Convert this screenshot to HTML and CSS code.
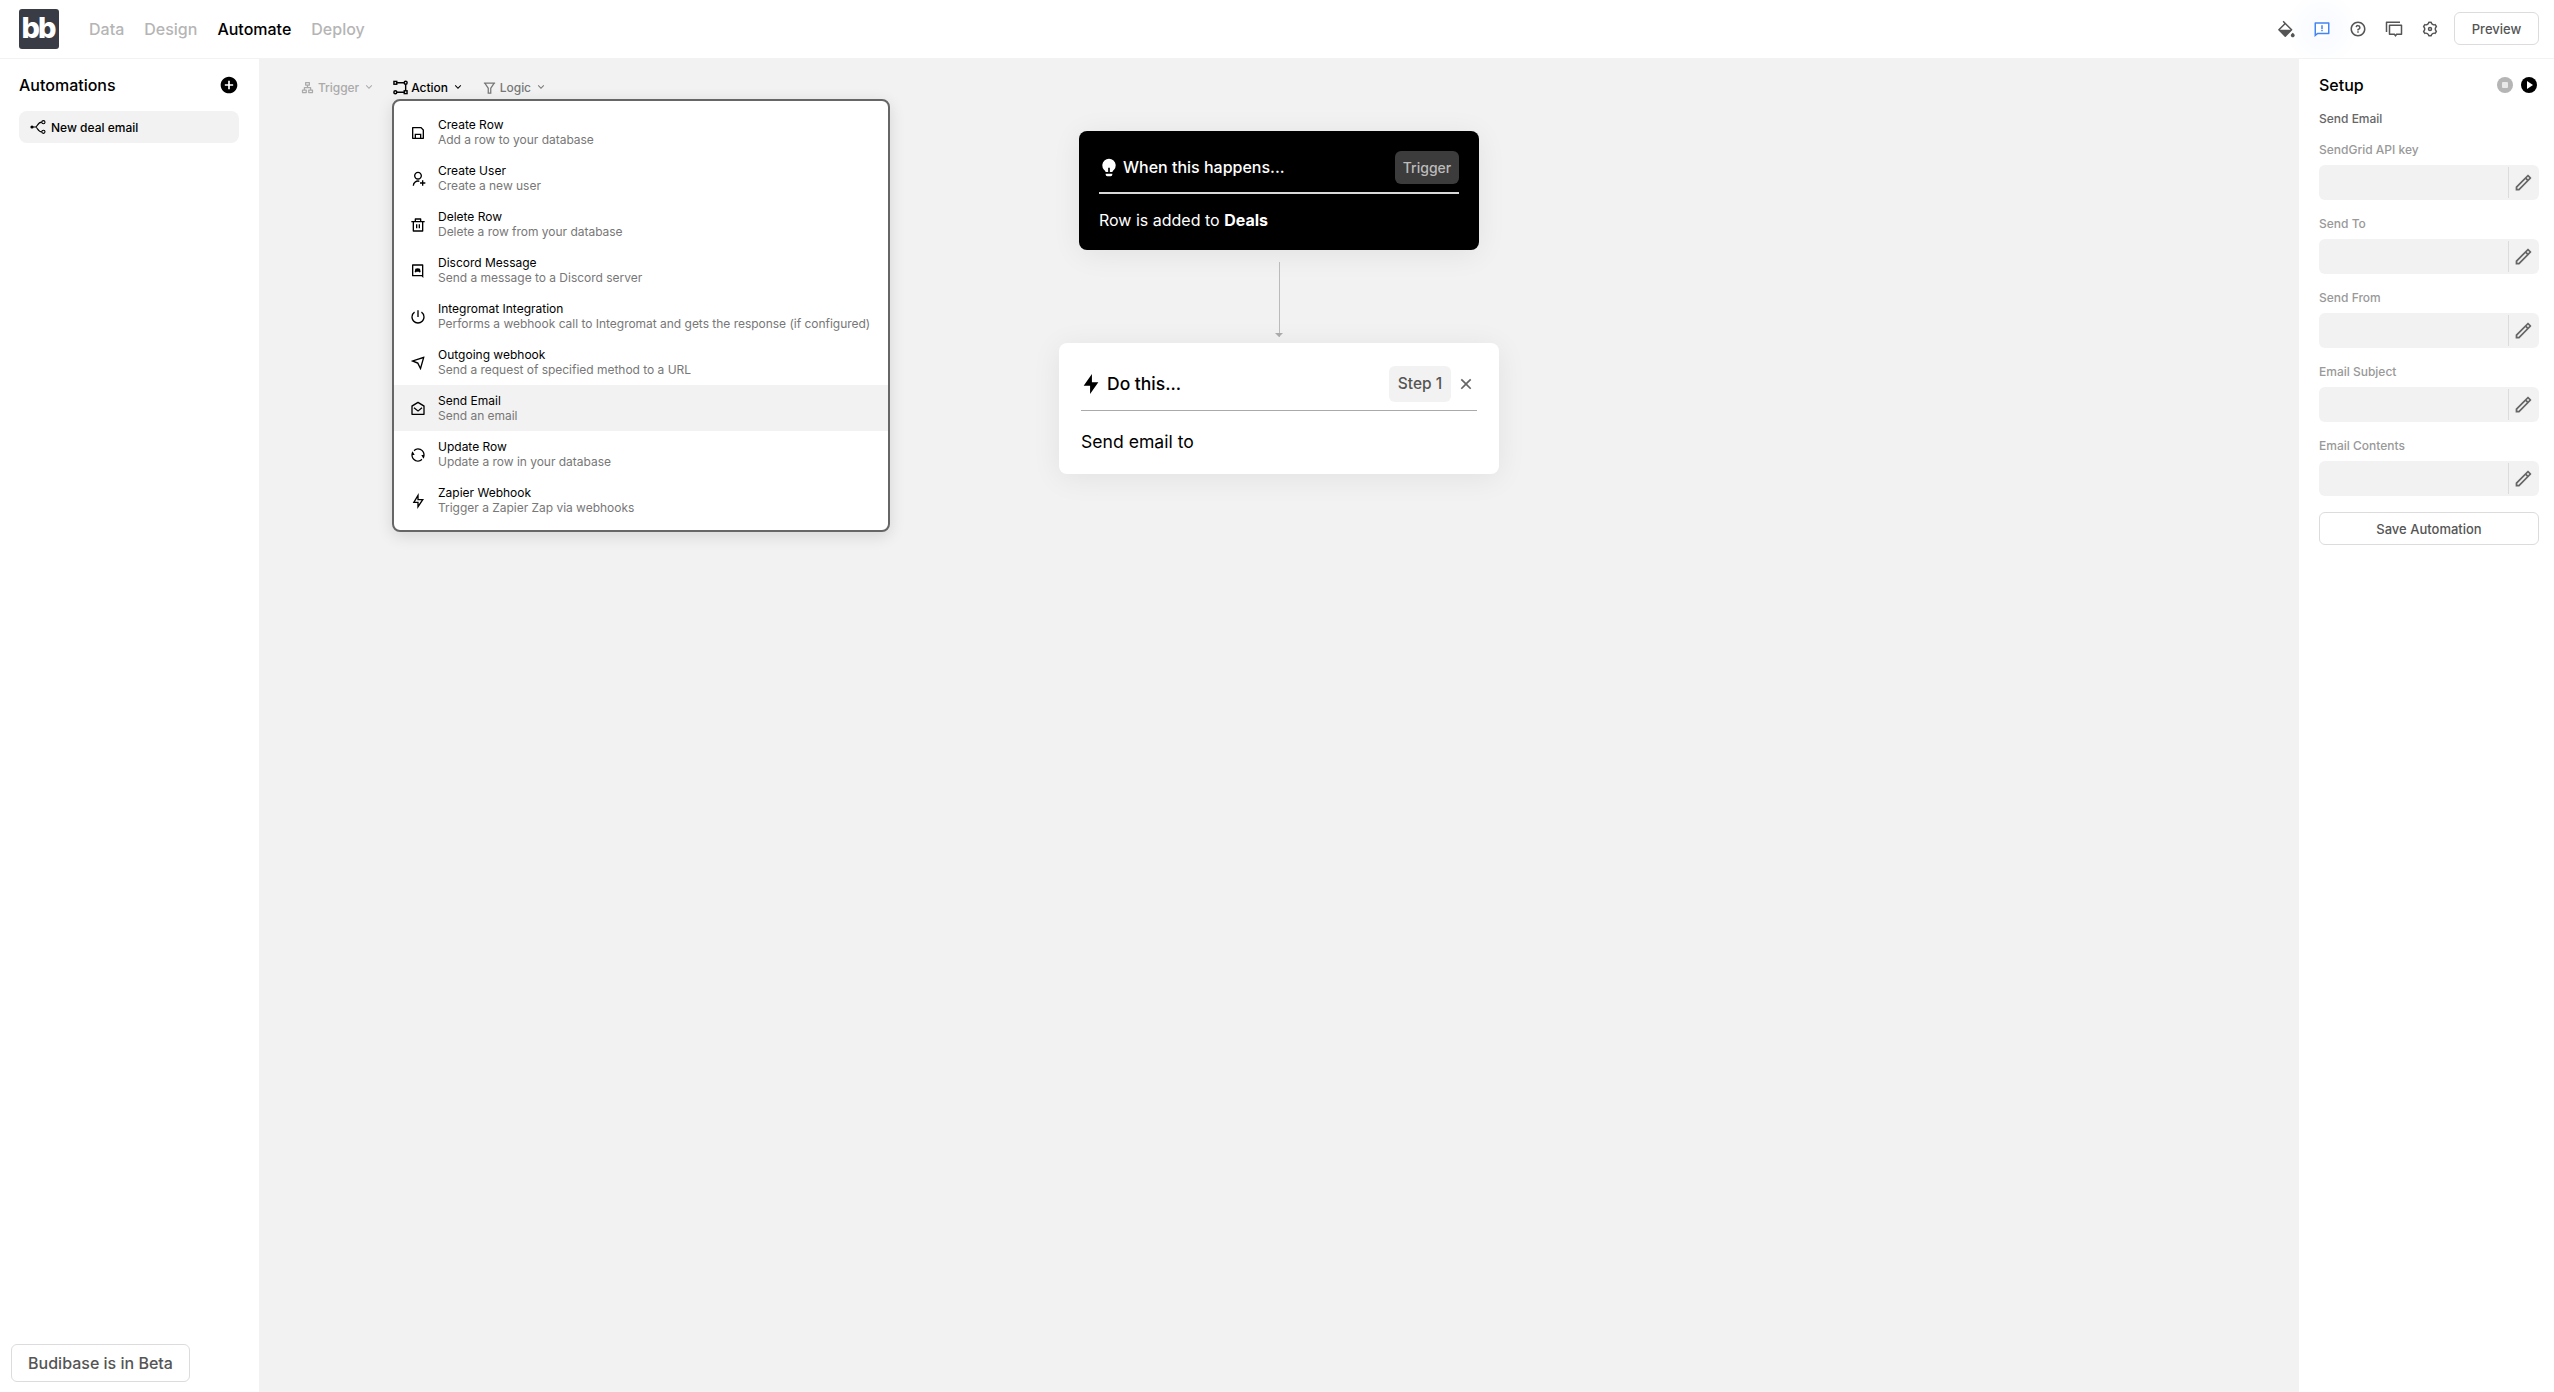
FILE: index.html
```html
<!DOCTYPE html>
<html>
<head>
    <meta charset="utf-8">
    <title>Budibase - Automate</title>
    <link rel="stylesheet" href="styles.css">
</head>
<body>
<div class="app">
    <header class="topbar">
        <div class="logo"><span>bb</span></div>
        <nav class="tabs">
            <a class="tab">Data</a>
            <a class="tab">Design</a>
            <a class="tab active">Automate</a>
            <a class="tab">Deploy</a>
        </nav>
        <div class="toolbar-right">
            <svg class="top-icon" viewBox="0 0 24 24"><path d="M19.228 18.732l1.768-1.768 1.767 1.768a2.5 2.5 0 1 1-3.535 0zM8.878 1.08l11.314 11.313a1 1 0 0 1 0 1.415l-8.485 8.485a1 1 0 0 1-1.414 0l-8.485-8.485a1 1 0 0 1 0-1.415l7.778-7.778-2.122-2.121L8.88 1.08zM11 6.03L3.929 13.1H18.07L11 6.03z"/></svg>
            <span class="glow"><svg class="top-icon blue" viewBox="0 0 24 24"><path d="M6.455 19L2 22.5V4a1 1 0 0 1 1-1h18a1 1 0 0 1 1 1v14a1 1 0 0 1-1 1H6.455zm-.692-2H20V5H4v13.385L5.763 17zM11 13h2v2h-2v-2zm0-6h2v5h-2V7z"/></svg></span>
            <svg class="top-icon" viewBox="0 0 24 24"><path d="M12 22C6.477 22 2 17.523 2 12S6.477 2 12 2s10 4.477 10 10-4.477 10-10 10zm0-2a8 8 0 1 0 0-16 8 8 0 0 0 0 16zm-1-5h2v2h-2v-2zm2-1.645V14h-2v-1.5a1 1 0 0 1 1-1 1.5 1.5 0 1 0-1.471-1.794l-1.962-.393A3.501 3.501 0 1 1 13 13.355z"/></svg>
            <svg class="top-icon chat" viewBox="0 0 24 24"><path d="M2 2h18v2H3v12H1V3a1 1 0 0 1 1-1zM6 6h16a1 1 0 0 1 1 1v12a1 1 0 0 1-1 1h-6l-2 2.5L12 20H6a1 1 0 0 1-1-1V7a1 1 0 0 1 1-1zm1 2v10h6l1 1.3 1-1.3h6V8H7z"/></svg>
            <svg class="top-icon" viewBox="0 0 24 24"><path d="M3.34 17a10.018 10.018 0 0 1-.978-2.326 3 3 0 0 0 .002-5.347A9.99 9.99 0 0 1 4.865 4.99a3 3 0 0 0 4.631-2.674 9.99 9.99 0 0 1 5.007.002 3 3 0 0 0 4.632 2.672c.579.59 1.093 1.261 1.525 2.01.433.749.757 1.53.978 2.326a3 3 0 0 0-.002 5.347 9.99 9.99 0 0 1-2.501 4.337 3 3 0 0 0-4.631 2.674 9.99 9.99 0 0 1-5.007-.002 3 3 0 0 0-4.632-2.672A10.018 10.018 0 0 1 3.34 17zm5.66.196a4.993 4.993 0 0 1 2.25 2.77c.499.047 1 .048 1.499.001A4.993 4.993 0 0 1 15 17.197a4.993 4.993 0 0 1 3.525-.565c.29-.408.54-.843.748-1.298A4.993 4.993 0 0 1 18 12c0-1.26.47-2.437 1.273-3.334a8.126 8.126 0 0 0-.75-1.298A4.993 4.993 0 0 1 15 6.804a4.993 4.993 0 0 1-2.25-2.77c-.499-.047-1-.048-1.499-.001A4.993 4.993 0 0 1 9 6.803a4.993 4.993 0 0 1-3.525.565 7.99 7.99 0 0 0-.748 1.298A4.993 4.993 0 0 1 6 12c0 1.26-.47 2.437-1.273 3.334a8.126 8.126 0 0 0 .75 1.298A4.993 4.993 0 0 1 9 17.196zM12 15a3 3 0 1 1 0-6 3 3 0 0 1 0 6zm0-2a1 1 0 1 0 0-2 1 1 0 0 0 0 2z"/></svg>
            <button class="outline-btn preview">Preview</button>
        </div>
    </header>

    <div class="main">
        <aside class="sidebar">
            <div class="panel-head">
                <h2>Automations</h2>
                <svg class="add-icon" viewBox="0 0 24 24"><path d="M12 22C6.477 22 2 17.523 2 12S6.477 2 12 2s10 4.477 10 10-4.477 10-10 10zm-1-11H7v2h4v4h2v-4h4v-2h-4V7h-2v4z"/></svg>
            </div>
            <div class="auto-row">
                <svg class="row-icon" viewBox="0 0 16 16"><circle cx="2" cy="8" r="1.6"/><circle cx="13.4" cy="3.2" r="1.6" fill="none" stroke="#000" stroke-width="1.1"/><circle cx="13.4" cy="12.8" r="1.6" fill="none" stroke="#000" stroke-width="1.1"/><path d="M3 8h2.5c2 0 2-4.8 6.3-4.8M5.5 8c2 0 2 4.8 6.3 4.8" fill="none" stroke="#000" stroke-width="1.2"/></svg>
                <span>New deal email</span>
            </div>
            <button class="outline-btn beta">Budibase is in Beta</button>
        </aside>

        <section class="canvas">
            <div class="block-tabs">
                <div class="block-tab muted">
                    <svg viewBox="0 0 24 24"><path d="M15 3a1 1 0 0 1 1 1v4a1 1 0 0 1-1 1h-2v2h4a1 1 0 0 1 1 1v3h2a1 1 0 0 1 1 1v4a1 1 0 0 1-1 1h-6a1 1 0 0 1-1-1v-4a1 1 0 0 1 1-1h2v-2H8v2h2a1 1 0 0 1 1 1v4a1 1 0 0 1-1 1H4a1 1 0 0 1-1-1v-4a1 1 0 0 1 1-1h2v-3a1 1 0 0 1 1-1h4V9H9a1 1 0 0 1-1-1V4a1 1 0 0 1 1-1h6zM9 17H5v2h4v-2zm10 0h-4v2h4v-2zM14 5h-4v2h4V5z"/></svg>
                    <span>Trigger</span>
                    <svg class="chev" viewBox="0 0 24 24"><path d="M12 13.172l4.95-4.95 1.414 1.414L12 16 5.636 9.636 7.05 8.222z"/></svg>
                </div>
                <div class="block-tab selected">
                    <svg viewBox="0 0 16 16"><g fill="none" stroke="#000" stroke-width="1.5"><rect x="1" y="1.5" width="3" height="3"/><circle cx="13.5" cy="3" r="1.6"/><circle cx="2.5" cy="13" r="1.6"/><rect x="12" y="11.5" width="3" height="3"/><path d="M4 3h8M4 13h8M13.5 4.6v6.9"/></g></svg>
                    <span>Action</span>
                    <svg class="chev" viewBox="0 0 24 24"><path d="M12 13.172l4.95-4.95 1.414 1.414L12 16 5.636 9.636 7.05 8.222z"/></svg>
                </div>
                <div class="block-tab logic">
                    <svg viewBox="0 0 24 24"><path d="M21 4v2h-1l-5 7.5V22H9v-8.5L4 6H3V4h18zM6.404 6L11 12.894V20h2v-7.106L17.596 6H6.404z"/></svg>
                    <span>Logic</span>
                    <svg class="chev" viewBox="0 0 24 24"><path d="M12 13.172l4.95-4.95 1.414 1.414L12 16 5.636 9.636 7.05 8.222z"/></svg>
                </div>

                <div class="dropdown">
                    <div class="drop-item">
                        <svg viewBox="0 0 24 24"><path d="M7 19v-6h10v6h2V7.828L16.172 5H5v14h2zM4 3h13l4 4v13a1 1 0 0 1-1 1H4a1 1 0 0 1-1-1V4a1 1 0 0 1 1-1zm5 12v4h6v-4H9z"/></svg>
                        <div><div class="drop-title">Create Row</div><div class="drop-desc">Add a row to your database</div></div>
                    </div>
                    <div class="drop-item">
                        <svg viewBox="0 0 24 24"><path d="M14 14.252v2.09A6 6 0 0 0 6 22l-2-.001a8 8 0 0 1 10-7.748zM12 13c-3.315 0-6-2.685-6-6s2.685-6 6-6 6 2.685 6 6-2.685 6-6 6zm0-2c2.21 0 4-1.79 4-4s-1.79-4-4-4-4 1.79-4 4 1.79 4 4 4zm6 6v-3h2v3h3v2h-3v3h-2v-3h-3v-2h3z"/></svg>
                        <div><div class="drop-title">Create User</div><div class="drop-desc">Create a new user</div></div>
                    </div>
                    <div class="drop-item">
                        <svg viewBox="0 0 24 24"><path d="M17 6h5v2h-2v13a1 1 0 0 1-1 1H5a1 1 0 0 1-1-1V8H2V6h5V3a1 1 0 0 1 1-1h8a1 1 0 0 1 1 1v3zm1 2H6v12h12V8zm-9 3h2v6H9v-6zm4 0h2v6h-2v-6zM9 4v2h6V4H9z"/></svg>
                        <div><div class="drop-title">Delete Row</div><div class="drop-desc">Delete a row from your database</div></div>
                    </div>
                    <div class="drop-item">
                        <svg viewBox="0 0 24 24"><path d="M4 2h15a1 1 0 0 1 1 1v19.5L17.5 20H4a1 1 0 0 1-1-1V3a1 1 0 0 1 1-1zm1 2v14h13V4H5zm3 4.5c2.5-1 4.5-1 7 0l1 5-2 .8-.7-1.1h-3.6l-.7 1.1-2-.8 1-5z"/></svg>
                        <div><div class="drop-title">Discord Message</div><div class="drop-desc">Send a message to a Discord server</div></div>
                    </div>
                    <div class="drop-item">
                        <svg viewBox="0 0 24 24"><path d="M6.265 3.807l1.147 1.639a8 8 0 1 0 9.176 0l1.147-1.639A9.988 9.988 0 0 1 22 12c0 5.523-4.477 10-10 10S2 17.523 2 12a9.988 9.988 0 0 1 4.265-8.193zM11 12V2h2v10h-2z"/></svg>
                        <div><div class="drop-title">Integromat Integration</div><div class="drop-desc">Performs a webhook call to Integromat and gets the response (if configured)</div></div>
                    </div>
                    <div class="drop-item">
                        <svg viewBox="0 0 24 24"><path d="M1.923 9.37c-.51-.205-.504-.51.034-.689l19.086-6.362c.529-.176.832.12.684.638l-5.454 19.086c-.15.529-.475.553-.717.07L11 13 1.923 9.37zm4.89-.2l5.636 2.255 3.04 6.082 3.546-12.41L6.812 9.17z"/></svg>
                        <div><div class="drop-title">Outgoing webhook</div><div class="drop-desc">Send a request of specified method to a URL</div></div>
                    </div>
                    <div class="drop-item hover">
                        <svg viewBox="0 0 24 24"><path d="M2.243 6.854L11.49 1.31a1 1 0 0 1 1.029 0l9.238 5.545a.5.5 0 0 1 .243.429V20a1 1 0 0 1-1 1H3a1 1 0 0 1-1-1V7.283a.5.5 0 0 1 .243-.429zM4 8.133V19h16V8.132l-7.996-4.8L4 8.132zm8.06 5.565l5.296-4.463 1.288 1.53-6.57 5.537-6.71-5.53 1.272-1.544 5.424 4.47z"/></svg>
                        <div><div class="drop-title">Send Email</div><div class="drop-desc">Send an email</div></div>
                    </div>
                    <div class="drop-item">
                        <svg viewBox="0 0 24 24"><path d="M5.463 4.433A9.961 9.961 0 0 1 12 2c5.523 0 10 4.477 10 10 0 2.136-.67 4.116-1.81 5.74L17 12h3A8 8 0 0 0 6.46 6.228l-.997-1.795zm13.074 15.134A9.961 9.961 0 0 1 12 22C6.477 22 2 17.523 2 12c0-2.136.67-4.116 1.81-5.74L7 12H4a8 8 0 0 0 13.54 5.772l.997 1.795z"/></svg>
                        <div><div class="drop-title">Update Row</div><div class="drop-desc">Update a row in your database</div></div>
                    </div>
                    <div class="drop-item">
                        <svg viewBox="0 0 24 24"><path d="M13 9h8L11 24v-9H4l9-15v9zm-2 2V7.22L7.532 13H13v4.394L17.263 11H11z"/></svg>
                        <div><div class="drop-title">Zapier Webhook</div><div class="drop-desc">Trigger a Zapier Zap via webhooks</div></div>
                    </div>
                </div>
            </div>

            <div class="flow">
                <div class="card trigger-card">
                    <div class="card-head">
                        <svg viewBox="0 0 24 24"><path d="M11 18H7.941c-.297-1.273-1.637-2.314-2.187-3a8 8 0 1 1 12.49.002c-.55.685-1.888 1.726-2.185 2.998H13v-5h-2v5zm5 2v1a2 2 0 0 1-2 2h-4a2 2 0 0 1-2-2v-1h8z"/></svg>
                        <span class="card-title">When this happens...</span>
                        <span class="tag">Trigger</span>
                    </div>
                    <p>Row is added to <b>Deals</b></p>
                </div>
                <div class="connector"></div>
                <div class="card step-card">
                    <div class="card-head">
                        <svg viewBox="0 0 24 24"><path d="M13 10h7l-9 13v-9H4l9-13z"/></svg>
                        <span class="card-title">Do this...</span>
                        <span class="tag">Step 1</span>
                        <svg class="close" viewBox="0 0 24 24"><path d="M12 10.586l4.95-4.95 1.414 1.414-4.95 4.95 4.95 4.95-1.414 1.414-4.95-4.95-4.95 4.95-1.414-1.414 4.95-4.95-4.95-4.95L7.05 5.636z"/></svg>
                    </div>
                    <p>Send email to</p>
                </div>
            </div>
        </section>

        <aside class="setup">
            <div class="panel-head">
                <h2>Setup</h2>
                <span class="round stop"><i></i></span>
                <span class="round play"><i></i></span>
            </div>
            <div class="setup-name">Send Email</div>
            <label class="field-label">SendGrid API key</label>
            <div class="field"><span class="field-input"></span><span class="field-btn"><svg viewBox="0 0 24 24"><path d="M15.728 9.686l-1.414-1.414L5 17.586V19h1.414l9.314-9.314zm1.414-1.414l1.414-1.414-1.414-1.414-1.414 1.414 1.414 1.414zM7.242 21H3v-4.243L16.435 3.322a1 1 0 0 1 1.414 0l2.829 2.829a1 1 0 0 1 0 1.414L7.243 21z"/></svg></span></div>
            <label class="field-label">Send To</label>
            <div class="field"><span class="field-input"></span><span class="field-btn"><svg viewBox="0 0 24 24"><path d="M15.728 9.686l-1.414-1.414L5 17.586V19h1.414l9.314-9.314zm1.414-1.414l1.414-1.414-1.414-1.414-1.414 1.414 1.414 1.414zM7.242 21H3v-4.243L16.435 3.322a1 1 0 0 1 1.414 0l2.829 2.829a1 1 0 0 1 0 1.414L7.243 21z"/></svg></span></div>
            <label class="field-label">Send From</label>
            <div class="field"><span class="field-input"></span><span class="field-btn"><svg viewBox="0 0 24 24"><path d="M15.728 9.686l-1.414-1.414L5 17.586V19h1.414l9.314-9.314zm1.414-1.414l1.414-1.414-1.414-1.414-1.414 1.414 1.414 1.414zM7.242 21H3v-4.243L16.435 3.322a1 1 0 0 1 1.414 0l2.829 2.829a1 1 0 0 1 0 1.414L7.243 21z"/></svg></span></div>
            <label class="field-label">Email Subject</label>
            <div class="field"><span class="field-input"></span><span class="field-btn"><svg viewBox="0 0 24 24"><path d="M15.728 9.686l-1.414-1.414L5 17.586V19h1.414l9.314-9.314zm1.414-1.414l1.414-1.414-1.414-1.414-1.414 1.414 1.414 1.414zM7.242 21H3v-4.243L16.435 3.322a1 1 0 0 1 1.414 0l2.829 2.829a1 1 0 0 1 0 1.414L7.243 21z"/></svg></span></div>
            <label class="field-label">Email Contents</label>
            <div class="field"><span class="field-input"></span><span class="field-btn"><svg viewBox="0 0 24 24"><path d="M15.728 9.686l-1.414-1.414L5 17.586V19h1.414l9.314-9.314zm1.414-1.414l1.414-1.414-1.414-1.414-1.414 1.414 1.414 1.414zM7.242 21H3v-4.243L16.435 3.322a1 1 0 0 1 1.414 0l2.829 2.829a1 1 0 0 1 0 1.414L7.243 21z"/></svg></span></div>
            <button class="outline-btn save">Save Automation</button>
        </aside>
    </div>
</div>
</body>
</html>
```

FILE: styles.css
```css
* {
    box-sizing: border-box;
    font-family: Inter, "Liberation Sans", sans-serif;
}

html, body {
    height: 100%;
    margin: 0;
    overflow: hidden;
    background: #fff;
}

.app {
    height: 100vh;
    display: flex;
    flex-direction: column;
}

/* top bar */
.topbar {
    height: 59px;
    flex: none;
    display: flex;
    align-items: center;
    padding: 0 15px 1px 19px;
    border-bottom: 1px solid #f2f2f2;
}

.logo {
    width: 40px;
    height: 40px;
    border-radius: 3px;
    background: #393c44;
    color: #fff;
    display: flex;
    align-items: center;
    justify-content: center;
}

.logo span {
    font-size: 29px;
    font-weight: 800;
    letter-spacing: -2px;
    margin: -3px 2px 0 0;
}

.tabs {
    display: flex;
    gap: 20px;
    margin-left: 30px;
}

.tab {
    font-size: 16px;
    font-weight: 500;
    color: #b5b5b5;
}

.tab.active {
    color: #000;
}

.toolbar-right {
    margin-left: auto;
    display: flex;
    align-items: center;
}

.top-icon {
    width: 18px;
    height: 18px;
    margin-right: 18px;
    fill: #555;
    display: block;
}

.top-icon.blue {
    fill: #4285f4;
    margin-right: 0;
}

.glow {
    margin-right: 18px;
    border-radius: 50%;
    box-shadow: 0 0 18px 16px rgba(66, 133, 244, 0.03);
}

.outline-btn {
    background: #fff;
    border: 1px solid #dcdcdc;
    border-radius: 6px;
    color: #555;
    font-weight: 500;
    padding: 0;
}

.preview {
    width: 85px;
    height: 33px;
    margin-left: -3px;
    font-size: 13px;
}

.main {
    flex: 1;
    display: flex;
    min-height: 0;
}

/* left sidebar */
.sidebar {
    width: 259px;
    flex: none;
    display: flex;
    flex-direction: column;
    padding: 17px 20px 10px 19px;
}

.panel-head {
    display: flex;
    align-items: center;
    height: 18px;
}

.panel-head h2 {
    margin: 0;
    flex: 1;
    font-size: 16px;
    font-weight: 500;
    color: #000;
}

.add-icon {
    width: 20px;
    height: 20px;
}

.auto-row {
    margin-top: 17px;
    height: 32px;
    border-radius: 8px;
    background: #f2f2f2;
    display: flex;
    align-items: center;
    padding-left: 11px;
    font-size: 12px;
    font-weight: 500;
    color: #000;
}

.row-icon {
    width: 16px;
    height: 16px;
    margin-right: 5px;
}

.beta {
    margin: auto 0 0 -8px;
    width: 179px;
    height: 38px;
    font-size: 16px;
}

/* canvas */
.canvas {
    flex: 1;
    min-width: 0;
    background: #f2f2f2;
    display: flex;
    flex-direction: column;
}

.block-tabs {
    position: relative;
    height: 20px;
    margin: 18px 0 0 41px;
    display: flex;
    align-items: center;
    font-size: 12px;
    font-weight: 500;
    letter-spacing: -0.05px;
    color: #000;
}

.block-tab {
    display: flex;
    align-items: center;
    margin-right: 18px;
}

.block-tab svg {
    width: 15px;
    height: 15px;
    margin-right: 3px;
}

.block-tab svg.chev {
    width: 12px;
    height: 12px;
    margin: 0 0 0 4px;
}

.block-tab.muted {
    color: #aaa;
}

.block-tab.muted svg {
    fill: #aaa;
}

.block-tab.logic {
    color: #777;
}

.block-tab.logic svg {
    fill: #777;
}

.dropdown {
    position: absolute;
    top: 22px;
    left: 92px;
    width: 498px;
    height: 433px;
    padding: 8px 0;
    background: #fff;
    border: 2px solid #666;
    border-radius: 8px;
    box-shadow: 0 4px 16px rgba(0, 0, 0, 0.12);
    letter-spacing: normal;
    z-index: 2;
}

.drop-item {
    height: 46px;
    display: flex;
    align-items: center;
    padding-left: 16px;
}

.drop-item.hover {
    background: #f2f2f2;
}

.drop-item svg {
    width: 16px;
    height: 16px;
    margin-right: 12px;
    flex: none;
    position: relative;
    top: 1px;
}

.drop-title {
    font-size: 12px;
    line-height: 15px;
    color: #000;
    font-weight: 400;
}

.drop-desc {
    font-size: 12px;
    line-height: 15px;
    font-weight: 400;
    letter-spacing: -0.02px;
    color: #777;
}

.flow {
    display: flex;
    flex-direction: column;
    align-items: center;
    margin-top: 34px;
}

.card {
    border-radius: 8px;
    box-shadow: 0 4px 30px rgba(0, 0, 0, 0.07);
    font-size: 16px;
}

.card p {
    margin: 0;
}

.card-head {
    display: flex;
    align-items: center;
}

.card-title {
    flex: 1;
    font-weight: 500;
}

.tag {
    border-radius: 6px;
    font-size: 14px;
    font-weight: 500;
}

.trigger-card {
    width: 400px;
    height: 119px;
    padding: 20px;
    background: #000;
    color: #fff;
}

.trigger-card .card-head {
    height: 43px;
    padding-bottom: 9px;
    border-bottom: 2px solid #d8d8d8;
}

.trigger-card .card-head svg {
    width: 20px;
    height: 20px;
    fill: #fff;
    margin: 0 4px 0 0;
}

.trigger-card .tag {
    width: 64px;
    height: 33px;
    line-height: 33px;
    text-align: center;
    background: #3c3c3c;
    color: #bbb;
}

.trigger-card p {
    margin-top: 16px;
    line-height: 20px;
}

.connector {
    position: relative;
    width: 1px;
    height: 75px;
    margin: 12px 0 6px;
    background: #bbb;
}

.connector::after {
    content: "";
    position: absolute;
    left: -4px;
    bottom: 0;
    border: 4.5px solid transparent;
    border-top-color: #aaa;
    border-bottom: 0;
}

.step-card {
    width: 440px;
    height: 131px;
    padding: 22px 22px 0;
    background: #fff;
    color: #000;
}

.step-card .card-head {
    height: 46px;
    padding-bottom: 8px;
    border-bottom: 1px solid #aaa;
}

.step-card .card-head > svg:first-child {
    width: 22px;
    height: 22px;
    margin: 0 5px 0 -1px;
}

.step-card .card-title {
    font-size: 17.5px;
}

.step-card .tag {
    width: 62px;
    height: 36px;
    line-height: 36px;
    text-align: center;
    background: #f2f2f2;
    color: #555;
    font-size: 15.5px;
}

.close {
    width: 20px;
    height: 20px;
    margin: 0 1px 0 5px;
    fill: #666;
}

.step-card p {
    margin-top: 20px;
    font-size: 17.6px;
    line-height: 21px;
}

/* right panel */
.setup {
    width: 255px;
    flex: none;
    padding: 16px 15px 0 20px;
    background: #fff;
}

.setup .panel-head {
    padding-right: 2px;
    margin-top: 1px;
}

.round {
    width: 16px;
    height: 16px;
    border-radius: 50%;
    display: flex;
    align-items: center;
    justify-content: center;
}

.round.stop {
    background: #b5b5b5;
    margin-right: 8px;
}

.round.stop i {
    width: 6px;
    height: 6px;
    border-radius: 1px;
    background: #e8e8e8;
}

.round.play {
    background: #000;
}

.round.play i {
    border-left: 6px solid #fff;
    border-top: 4px solid transparent;
    border-bottom: 4px solid transparent;
    margin-left: 1px;
}

.setup-name {
    margin-top: 17px;
    font-size: 12px;
    line-height: 15px;
    font-weight: 500;
    color: #666;
}

.field-label {
    display: block;
    margin-top: 16px;
    font-size: 12px;
    line-height: 15px;
    font-weight: 500;
    color: #999;
}

.field {
    height: 35px;
    margin-top: 8px;
    border-radius: 6px;
    background: #f2f2f2;
    display: flex;
    align-items: center;
}

.field-input {
    flex: 1;
}

.field-btn {
    width: 31px;
    height: 31px;
    border-left: 1px solid #dcdcdc;
    display: flex;
    align-items: center;
    justify-content: center;
}

.field-btn svg {
    width: 21px;
    height: 21px;
    margin-right: 1px;
    fill: #666;
}

.save {
    width: 220px;
    height: 33px;
    margin-top: 16px;
    font-size: 13px;
}
```
